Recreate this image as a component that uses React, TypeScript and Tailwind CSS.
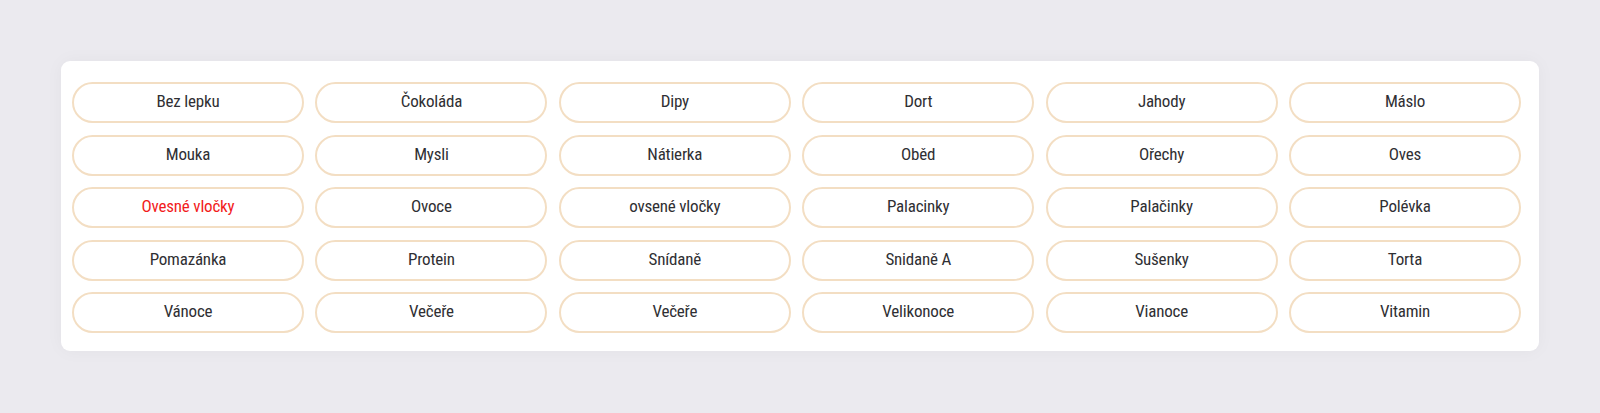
import React from 'react';

const tags = [
  'Bez lepku', 'Čokoláda', 'Dipy', 'Dort', 'Jahody', 'Máslo',
  'Mouka', 'Mysli', 'Nátierka', 'Oběd', 'Ořechy', 'Oves',
  'Ovesné vločky', 'Ovoce', 'ovsené vločky', 'Palacinky', 'Palačinky', 'Polévka',
  'Pomazánka', 'Protein', 'Snídaně', 'Snidaně A', 'Sušenky', 'Torta',
  'Vánoce', 'Večeře', 'Večeře', 'Velikonoce', 'Vianoce', 'Vitamin',
];

const active = 'Ovesné vločky';

export default function App() {
  return (
    <div className="min-h-[413px] w-full bg-[#ebeaef] pt-[61px] pl-[61px] font-['Roboto_Condensed',Roboto,sans-serif]">
      <div className="w-[1478px] rounded-[9px] bg-white pl-[11px] pr-[18px] pt-[21px] pb-[18px] shadow-[0_0_18px_rgba(0,0,0,0.04)]">
        <div className="grid grid-cols-6 gap-x-[11.4px] gap-y-[11.5px]">
          {tags.map((t, i) => (
            <button
              key={i}
              className={
                'h-[41px] rounded-full border-2 border-[#f3dec3] bg-white pb-[2px] text-[17px] leading-none tracking-[-0.2px] ' +
                (t === active ? 'text-[#f21b1b]' : 'text-[#2f2f33]')
              }
            >
              {t}
            </button>
          ))}
        </div>
      </div>
    </div>
  );
}
